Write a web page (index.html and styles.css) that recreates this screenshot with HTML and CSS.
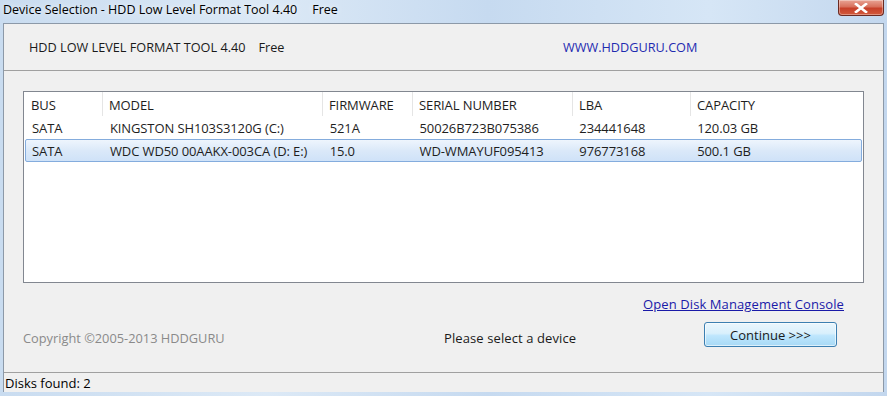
FILE: index.html
```html
<!DOCTYPE html>
<html>
<head>
<meta charset="utf-8">
<link rel="stylesheet" href="styles.css">
</head>
<body>
<div class="window">
  <div class="titlebar">
    <span class="title">Device Selection - HDD Low Level Format Tool 4.40</span>
    <span class="title free">Free</span>
    <div class="close">
      <svg width="14" height="10" viewBox="0 0 14 10"><path d="M2 1 L12 9 M12 1 L2 9" stroke="#fff" stroke-width="2.6" stroke-linecap="square"/></svg>
    </div>
  </div>
  <div class="client">
    <div class="header">
      <div class="prodgroup">
        <span class="product">HDD LOW LEVEL FORMAT TOOL 4.40</span>
        <span class="product free2">Free</span>
      </div>
      <span class="site">WWW.HDDGURU.COM</span>
    </div>
    <div class="main">
      <div class="list">
        <div class="row head">
          <div class="c bus">BUS</div>
          <div class="c model">MODEL</div>
          <div class="c fw">FIRMWARE</div>
          <div class="c sn">SERIAL NUMBER</div>
          <div class="c lba">LBA</div>
          <div class="c cap">CAPACITY</div>
        </div>
        <div class="row">
          <div class="c bus">SATA</div>
          <div class="c model">KINGSTON SH103S3120G (C:)</div>
          <div class="c fw">521A</div>
          <div class="c sn">50026B723B075386</div>
          <div class="c lba">234441648</div>
          <div class="c cap">120.03 GB</div>
        </div>
        <div class="row selected">
          <div class="c bus">SATA</div>
          <div class="c model">WDC WD50 00AAKX-003CA (D: E:)</div>
          <div class="c fw">15.0</div>
          <div class="c sn">WD-WMAYUF095413</div>
          <div class="c lba">976773168</div>
          <div class="c cap">500.1 GB</div>
        </div>
      </div>
      <div class="linkrow"><a class="link">Open Disk Management Console</a></div>
      <div class="bottom">
        <span class="copy">Copyright ©2005-2013 HDDGURU</span>
        <span class="msg">Please select a device</span>
        <button class="btn">Continue &gt;&gt;&gt;</button>
      </div>
    </div>
    <div class="status">Disks found: 2</div>
  </div>
</div>
</body>
</html>
```
FILE: styles.css
```css
html, body {
  margin: 0;
  padding: 0;
}
body {
  width: 887px;
  height: 396px;
  overflow: hidden;
  font-family: "Open Sans", "Noto Sans", sans-serif;
  font-size: 13px;
  color: #1e1e1e;
}
.window {
  width: 887px;
  height: 396px;
  display: flex;
  flex-direction: column;
  background: linear-gradient(90deg, #c9dcf0 0%, #dce9f6 30%, #c6daf0 55%, #d6e6f6 80%, #c3d7ee 100%);
}
.titlebar {
  height: 23px;
  display: flex;
  align-items: flex-start;
  padding-left: 3px;
  position: relative;
}
.title {
  font-size: 12.5px;
  line-height: 20px;
  color: #000;
  text-shadow: 0 0 6px rgba(255,255,255,0.9);
}
.title.free {
  margin-left: 15px;
}
.close {
  position: absolute;
  left: 838px;
  top: 0;
  width: 44px;
  height: 15px;
  border: 1px solid #6b2a22;
  border-top: none;
  border-radius: 0 0 4px 4px;
  background: linear-gradient(180deg, #e9a495 0%, #d8705c 45%, #c7402a 55%, #d25a3c 100%);
  display: flex;
  align-items: center;
  justify-content: center;
  box-shadow: inset 0 0 0 1px rgba(255,255,255,0.35);
}
.client {
  flex: 1;
  margin: 0 3px 4px 3px;
  border: 1px solid #8c99a8;
  border-bottom: none;
  background: #f0f0f0;
  display: flex;
  flex-direction: column;
}
.header {
  height: 46px;
  border-bottom: 1px solid #a0a0a0;
  display: flex;
  align-items: center;
  padding-left: 25px;
  font-size: 12.7px;
}
.prodgroup {
  width: 534px;
  display: flex;
}
.product {
  color: #1a1a1a;
}
.free2 {
  margin-left: 13px;
}
.site {
  color: #1f2bb0;
}
.main {
  flex: 1;
  padding: 20px 19px 0 19px;
  display: flex;
  flex-direction: column;
}
.list {
  height: 190px;
  border: 1px solid #828790;
  background: #fff;
  padding: 0 1px;
}
.row {
  display: flex;
  height: 23px;
  box-sizing: border-box;
  align-items: center;
  border: 1px solid transparent;
  border-radius: 2px;
}
.row.head {
  height: 24px;
  border: none;
  border-radius: 0;
  align-items: stretch;
}
.row.head .c {
  height: 24px;
  line-height: 26px;
  border-right: 1px solid #e5e5e5;
}
.row.head .c.cap {
  border-right: none;
}
.row.selected {
  border-color: #84acdd;
  background: linear-gradient(180deg, #eef5fd 0%, #dbe9f9 50%, #cfe2f8 100%);
}
.c {
  padding-left: 6px;
  box-sizing: border-box;
  white-space: nowrap;
  letter-spacing: -0.1px;
}
.bus { width: 78px; }
.model { width: 220px; }
.fw { width: 90px; }
.sn { width: 160px; }
.lba { width: 118px; }
.cap { width: 170px; }
.linkrow {
  display: flex;
  justify-content: flex-end;
  padding-right: 20px;
  margin-top: 12px;
  height: 18px;
}
.link {
  color: #1a1aa8;
  text-decoration: underline;
  line-height: 18px;
  font-size: 13px;
  letter-spacing: 0.1px;
}
.bottom {
  display: flex;
  align-items: flex-start;
  margin-top: 9px;
}
.copy {
  width: 421px;
  margin-top: 7px;
  line-height: 18px;
  color: #8a8a8a;
  font-size: 12.8px;
}
.msg {
  width: 260px;
  margin-top: 7px;
  line-height: 18px;
  color: #1a1a1a;
  font-size: 13px;
  letter-spacing: 0.1px;
}
.btn {
  width: 133px;
  height: 25px;
  border: 1px solid #3c7fb1;
  border-radius: 3px;
  background: linear-gradient(180deg, #eaf6fd 0%, #d9f0fc 45%, #bee6fd 55%, #a7d9f5 100%);
  box-shadow: inset 0 0 0 1px rgba(255,255,255,0.6);
  font-family: "Open Sans", "Noto Sans", sans-serif;
  font-size: 13px;
  color: #1a1a1a;
  padding: 0;
}
.status {
  height: 19px;
  border-top: 1px solid #a0a0a0;
  line-height: 20px;
  padding-left: 1px;
  font-size: 13px;
  color: #000;
}
```
